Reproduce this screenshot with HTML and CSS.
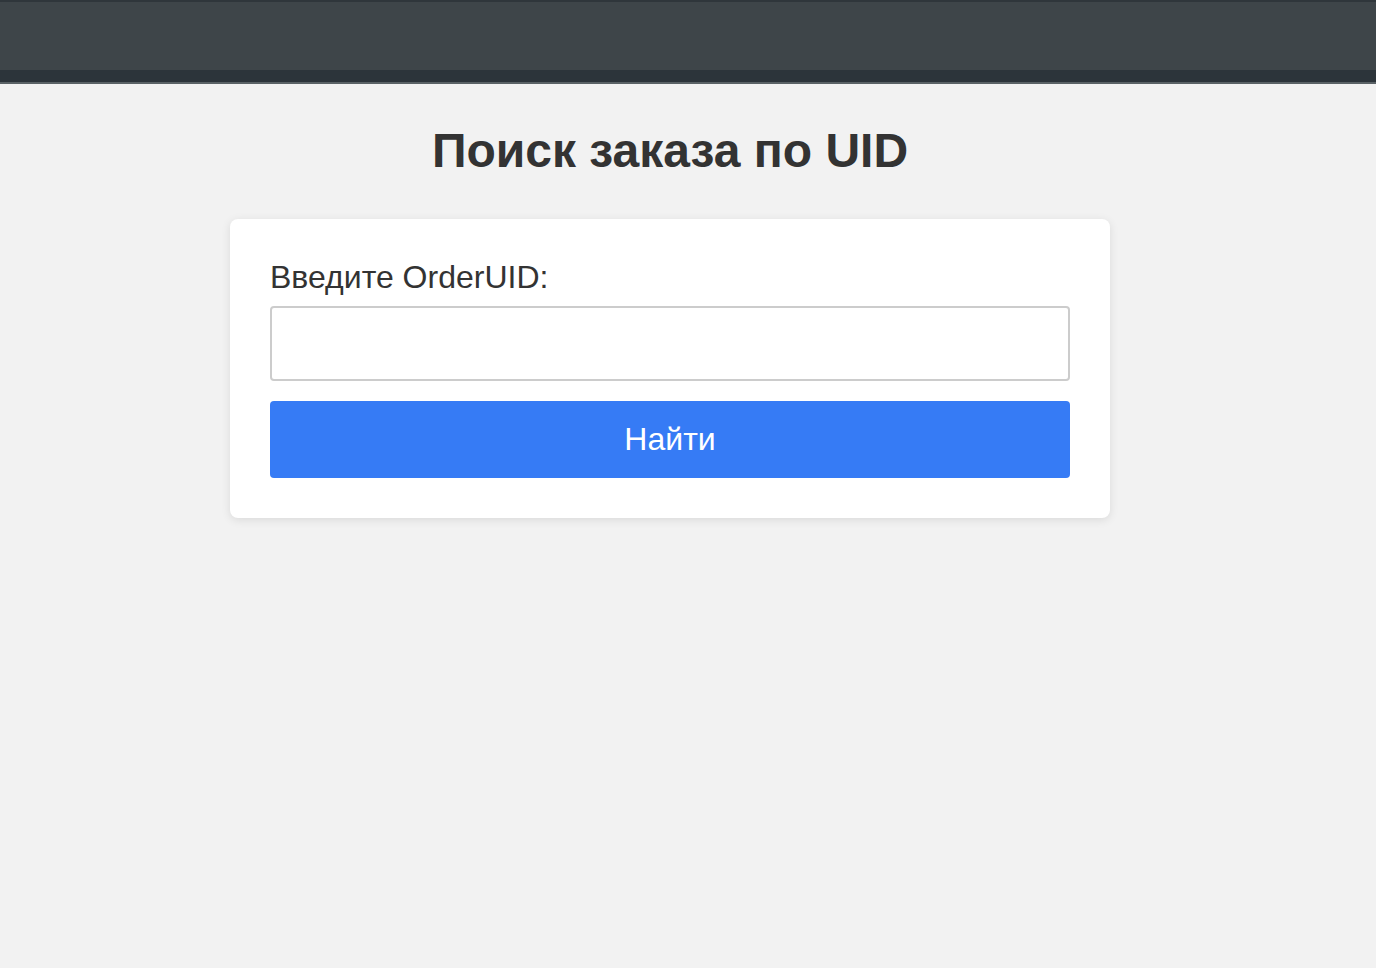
FILE: index.html
```html
<!DOCTYPE html>
<html lang="ru">
<head>
<meta charset="utf-8">
<title>Поиск заказа по UID</title>
<link rel="stylesheet" href="styles.css">
</head>
<body>
<header class="topbar">
  <div class="topbar-main"></div>
  <div class="topbar-sub"></div>
</header>
<main class="page">
  <h1 class="title">Поиск заказа по UID</h1>
  <form class="card">
    <label class="label" for="uid">Введите OrderUID:</label>
    <input class="input" id="uid" type="text">
    <button class="btn" type="button">Найти</button>
  </form>
</main>
</body>
</html>
```

FILE: styles.css
```css
html, body {
  margin: 0;
  padding: 0;
}
body {
  background: #f2f2f2;
  font-family: "Liberation Sans", Arial, sans-serif;
  color: #333;
  min-height: 968px;
}
.topbar {
  border-top: 2px solid #2f363b;
  border-bottom: 2px solid #5a6266;
}
.topbar-main {
  height: 68px;
  background: #3e4549;
}
.topbar-sub {
  height: 12px;
  background: #2c343a;
}
.page {
  display: flex;
  flex-direction: column;
  align-items: center;
  padding-right: 36px;
  padding-top: 39px;
}
.title {
  margin: 0 0 41px;
  font-size: 48px;
  font-weight: bold;
  color: #333;
}
.card {
  box-sizing: border-box;
  width: 880px;
  background: #fff;
  border-radius: 8px;
  padding: 40px;
  box-shadow: 0 2px 10px rgba(0, 0, 0, 0.1);
  display: flex;
  flex-direction: column;
}
.label {
  font-size: 32px;
  line-height: 37px;
  margin-bottom: 10px;
  color: #333;
}
.input {
  box-sizing: border-box;
  height: 75px;
  border: 2px solid #ccc;
  border-radius: 4px;
  margin: 0 0 20px;
  font-size: 28px;
  padding: 0 16px;
  background: #fff;
}
.btn {
  height: 77px;
  border: 0;
  border-radius: 4px;
  background: #367bf5;
  color: #fff;
  font-family: "Liberation Sans", Arial, sans-serif;
  font-size: 32px;
}
```
